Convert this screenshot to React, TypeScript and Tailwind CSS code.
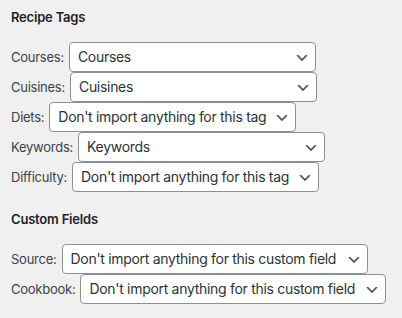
import React from "react";

function Chevron() {
  return (
    <svg width="16" height="16" viewBox="0 0 20 20" className="absolute right-[5px] top-[7px]">
      <path d="M5 6l5 5 5-5 2 1-7 7-7-7 2-1z" fill="#555555" />
    </svg>
  );
}

function Row({ label, value, width }: { label: string; value: string; width: string }) {
  return (
    <div className="flex h-[30px] items-center gap-[5px]">
      <span className="text-[13px] leading-[16px] tracking-[-0.25px] text-[#3c434a]">{label}</span>
      <div
        className={`relative flex h-[30px] items-center rounded-[4px] border border-[#8c8f94] bg-white pl-[8px] pr-[24px] text-[14px] leading-[20px] tracking-[-0.3px] text-[#2c3338] ${width}`}
      >
        <span className="overflow-hidden whitespace-nowrap">{value}</span>
        <Chevron />
      </div>
    </div>
  );
}

export default function App() {
  const tag = "Don't import anything for this tag";
  const cf = "Don't import anything for this custom field";
  return (
    <div
      className="h-[318px] w-[402px] overflow-hidden bg-[#f0f0f1] pl-[11px] pt-[9px]"
      style={{ fontFamily: "Inter, 'Liberation Sans', Arial, sans-serif" }}
    >
      <div className="mb-[17px] text-[13px] font-semibold leading-[16px] tracking-[-0.2px] text-[#1d2327]">Recipe Tags</div>
      <div className="flex flex-col">
        <Row label="Courses:" value="Courses" width="w-[247px]" />
        <Row label="Cuisines:" value="Cuisines" width="w-[247px]" />
        <Row label="Diets:" value={tag} width="w-[247px]" />
        <Row label="Keywords:" value="Keywords" width="w-[247px]" />
        <Row label="Difficulty:" value={tag} width="w-[247px]" />
      </div>
      <div className="mb-[17px] mt-[19px] text-[13px] font-semibold leading-[16px] tracking-[-0.2px] text-[#1d2327]">Custom Fields</div>
      <div className="flex flex-col">
        <Row label="Source:" value={cf} width="w-[306px]" />
        <Row label="Cookbook:" value={cf} width="w-[306px]" />
      </div>
    </div>
  );
}
